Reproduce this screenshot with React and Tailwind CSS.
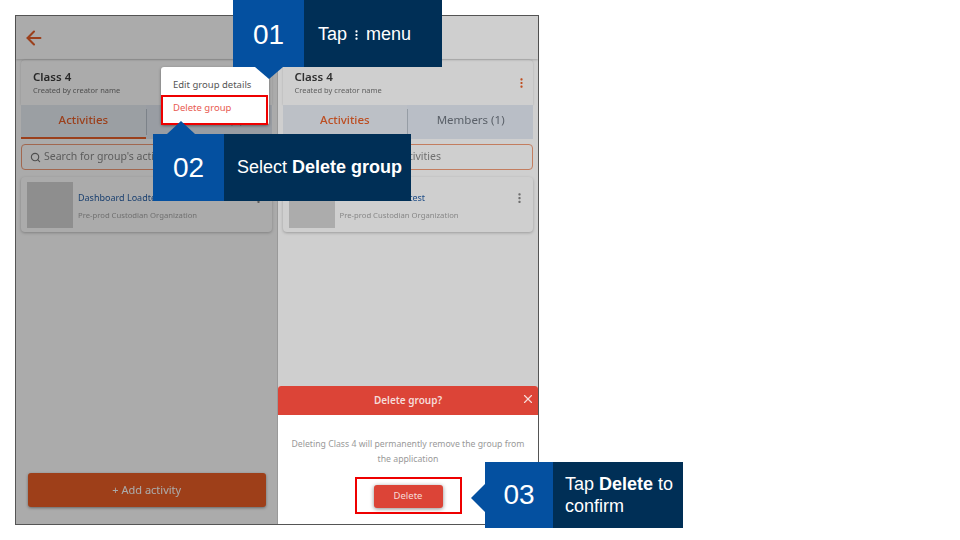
import React from "react";
import { ArrowLeft, Search, X } from "lucide-react";

const Dots = ({ className }) => (
  <svg viewBox="0 0 4 14" className={className} fill="currentColor">
    <rect x="0.5" y="0.5" width="3" height="3" rx="1" />
    <rect x="0.5" y="5.5" width="3" height="3" rx="1" />
    <rect x="0.5" y="10.5" width="3" height="3" rx="1" />
  </svg>
);

const GroupPanel = ({ withBack, withAdd, scrim }) => (
  <div className="relative flex h-full flex-1 flex-col bg-white">
    <div className="flex h-[43px] items-center px-[7px] shadow-[0_1px_2px_rgba(0,0,0,0.2)]">
      {withBack && <ArrowLeft className="h-[22px] w-[22px] text-[#e8602a]" strokeWidth={2.25} />}
    </div>
    <div className="mx-[5px] mt-[1px] flex h-[45px] items-start justify-between rounded-t-sm pt-[10px] pr-[10px] pl-[12px] shadow-[0_0_2px_rgba(0,0,0,0.2)]">
      <div>
        <p className="text-[11.5px] leading-[14px] font-semibold text-[#3c3c3c]">Class 4</p>
        <p className="text-[7.5px] leading-[13px] text-[#777777]">Created by creator name</p>
      </div>
      <Dots className="mt-[8px] h-[10px] w-[3px] text-[#ec5f26]" />
    </div>
    <div className="mx-[5px] flex h-[34px] bg-[#e4ebf4]">
      <div className="flex flex-1 items-center justify-center border-b-2 border-[#e8602a] bg-[#e8edf4] pb-[2px] text-[11.5px] font-medium text-[#e8602a]">
        Activities
      </div>
      <div className="my-[4px] w-px bg-[#b9c2cc]" />
      <div className="flex flex-1 items-center justify-center pb-[4px] text-[11.5px] text-[#6f7680]">
        Members (1)
      </div>
    </div>
    <div className="mx-[5px] mt-[5px] flex h-[26px] items-center gap-[3px] rounded border border-[#f09a76] px-[8px] text-[10.5px] text-[#8a8a8a]">
      <Search className="h-[11px] w-[11px] text-[#777777]" strokeWidth={2.5} />
      <span>Search for group's activities</span>
    </div>
    <div className="mx-[5px] mt-[7px] flex h-[55px] items-center rounded-sm px-[6px] shadow-[0_1px_3px_rgba(0,0,0,0.25)]">
      <div className="h-[46px] w-[46px] bg-[#d4d4d4]" />
      <div className="ml-[5px] flex-1 pt-[2px]">
        <p className="text-[9px] leading-[14px] text-[#2a62a8]">Dashboard Loadtest</p>
        <p className="mt-[4px] text-[7.7px] leading-[12px] text-[#a8a8a8]">Pre-prod Custodian Organization</p>
      </div>
      <Dots className="mr-[6px] mb-[14px] h-[12px] w-[3px] text-[#888888]" />
    </div>
    {withAdd && (
      <div className="mt-auto mr-[11px] mb-[17px] ml-[12px] flex h-[34px] items-center justify-center rounded-[3px] bg-[#ec5f26] text-[11px] text-white shadow-[0_1px_3px_rgba(0,0,0,0.4)]">
        + Add activity
      </div>
    )}
    <div className={`absolute inset-0 ${scrim}`} />
  </div>
);

export default function App() {
  return (
    <div className="relative h-[540px] w-[960px] overflow-hidden bg-white font-['Noto_Sans',sans-serif]">
      {/* phone frame with the two steps side by side */}
      <div className="absolute top-[15px] left-[15px] flex h-[510px] w-[524px] border border-[#555555] blur-[0.4px]">
        <GroupPanel withBack withAdd scrim="bg-black/33" />
        <div className="w-[1px] bg-[#999999]" />
        <GroupPanel scrim="bg-black/19" />
      </div>

      {/* context menu */}
      <div className="absolute top-[67px] left-[161px] h-[58px] w-[108px] rounded-[3px] bg-white shadow-[0_1px_3px_rgba(0,0,0,0.4)]">
        <p className="pt-[11px] pl-[12px] text-[9.5px] leading-[13px] text-[#555555]">Edit group details</p>
        <p className="pt-[10px] pl-[12px] text-[9.5px] leading-[13px] text-[#e85a50]">Delete group</p>
      </div>
      <div className="absolute top-[95px] left-[161px] h-[30px] w-[107px] border-2 border-[#ee0000]" />

      {/* delete dialog */}
      <div className="absolute top-[386px] left-[278px] h-[138px] w-[260px] overflow-hidden rounded-t-[3px] bg-white">
        <div className="relative flex h-[29px] items-center justify-center bg-[#dc4437] text-[10px] font-semibold text-[#f6dcd9]">
          Delete group?
          <X className="absolute top-[6px] right-[3px] h-[14px] w-[14px] text-[#f6dcd9]" strokeWidth={2} />
        </div>
        <p className="mx-auto mt-[22px] w-[240px] text-center text-[8.7px] leading-[15px] text-[#999999]">
          Deleting Class 4 will permanently remove the group from the application
        </p>
        <div className="mx-auto mt-[18px] flex h-[23px] w-[69px] items-center justify-center rounded-[3px] bg-[#dc4437] text-[9.5px] text-[#f6dcd9] shadow-[0_1px_4px_rgba(0,0,0,0.45)]">
          Delete
        </div>
      </div>
      <div className="absolute top-[477px] left-[355px] h-[37px] w-[107px] border-2 border-[#ee0000]" />

      {/* callouts */}
      <div className="absolute top-0 left-[233px] flex h-[67px] font-['Liberation_Sans',sans-serif] text-white">
        <div className="relative flex w-[71px] items-center justify-center bg-[#0450a0] pt-[2px] text-[28px]">
          01
          <div className="absolute top-[67px] left-[22px] h-0 w-0 border-x-[14px] border-t-[12px] border-x-transparent border-t-[#0450a0]" />
        </div>
        <div className="flex w-[138px] items-center gap-[8px] bg-[#002f56] pt-[2px] pl-[14px] text-[18px]">
          <span>Tap</span>
          <Dots className="h-[10px] w-[3px] text-white" />
          <span>menu</span>
        </div>
      </div>

      <div className="absolute top-[134px] left-[153px] flex h-[67px] font-['Liberation_Sans',sans-serif] text-white">
        <div className="relative flex w-[71px] items-center justify-center bg-[#0450a0] text-[28px]">
          02
          <div className="absolute -top-[13px] left-[14px] h-0 w-0 border-x-[14px] border-b-[13px] border-x-transparent border-b-[#0450a0]" />
        </div>
        <div className="flex w-[187px] items-center bg-[#002f56] pl-[13px] text-[18px]">
          <span>
            Select <b>Delete group</b>
          </span>
        </div>
      </div>

      <div className="absolute top-[462px] left-[485px] flex h-[66px] font-['Liberation_Sans',sans-serif] text-white">
        <div className="relative flex w-[68px] items-center justify-center bg-[#0450a0] text-[28px]">
          03
          <div className="absolute top-[22px] -left-[14px] h-0 w-0 border-y-[14px] border-r-[14px] border-y-transparent border-r-[#0450a0]" />
        </div>
        <div className="flex w-[130px] items-center bg-[#002f56] pl-[12px] text-[18px] leading-[22px]">
          <span>
            Tap <b>Delete</b> to confirm
          </span>
        </div>
      </div>
    </div>
  );
}
